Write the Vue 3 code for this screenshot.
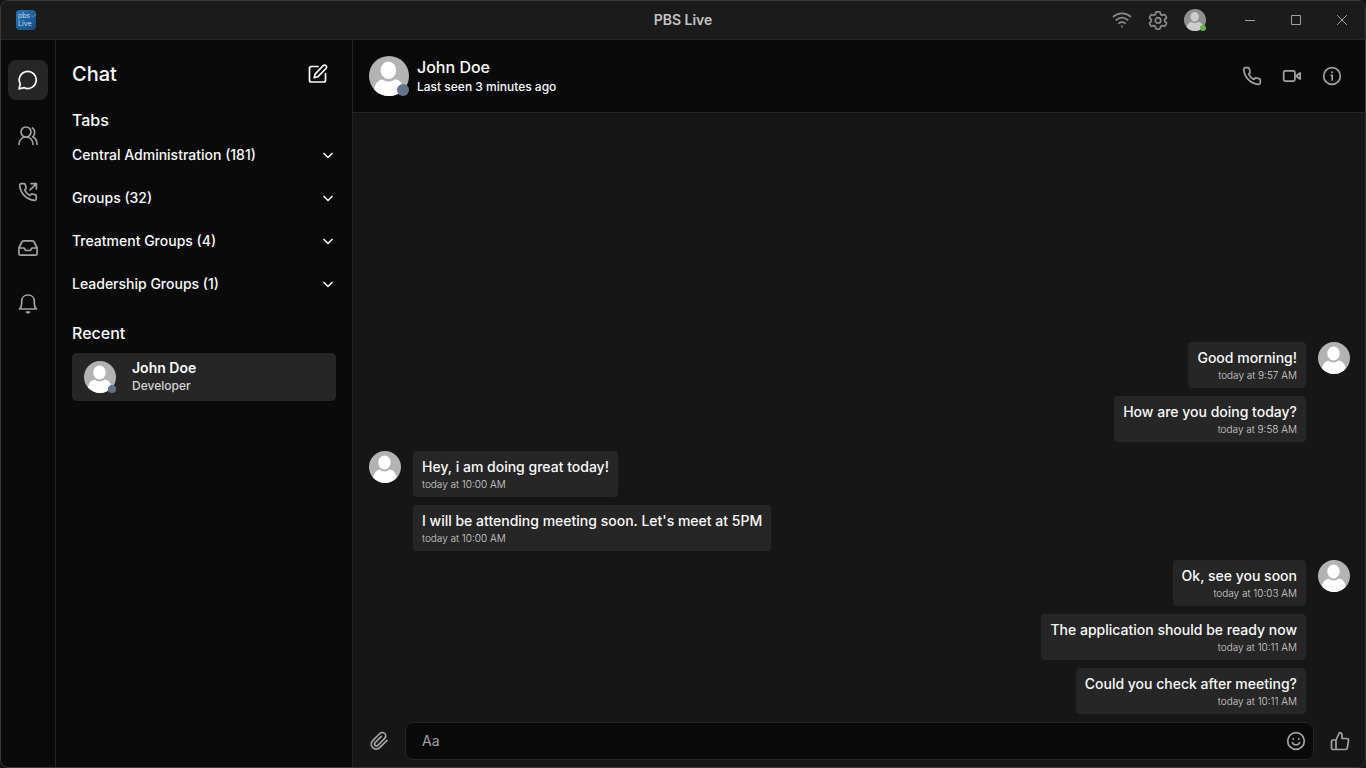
<template>
  <div class="window">
    <header class="titlebar">
      <div class="titlebar-left">
        <div class="app-logo">
          <span>pbs<i class="tick">✓</i></span>
          <span>Live</span>
        </div>
      </div>
      <h1 class="app-title">PBS Live</h1>
      <div class="titlebar-right">
        <button class="icon-button" aria-label="Connection">
          <svg class="icon" viewBox="0 0 20 20">
            <path d="M1.500 6.500c5-4.200 12-4.200 17 0M4.200 10c3.500-2.800 8.100-2.800 11.600 0M6.900 13.300c1.900-1.400 4.300-1.400 6.200 0" />
            <circle class="solid" cx="10" cy="16.500" r="1" />
          </svg>
        </button>
        <button class="icon-button" aria-label="Settings">
          <svg class="icon" viewBox="0 0 20 20">
            <path d="M8.600 1.800h2.800c.5 0 .7.300.8.700l.4 1.900 1.500.9 1.900-.7c.5-.2.800 0 1 .3l1.400 2.400c.2.400.1.700-.2 1l-1.500 1.200v1.800l1.500 1.300c.3.300.4.600.2 1L17 16c-.2.300-.5.500-1 .3l-1.900-.7-1.500.9-.4 1.900c-.1.400-.3.700-.8.700H8.600c-.5 0-.7-.3-.8-.7l-.4-1.900-1.500-.9-1.900.7c-.5.200-.8 0-1-.3l-1.400-2.400c-.2-.4-.1-.7.2-1l1.500-1.300V9.500L1.800 8.300c-.3-.3-.4-.6-.2-1L3 4.900c.2-.3.5-.5 1-.3l1.900.7 1.500-.9.4-1.900c.1-.4.300-.7.800-.7z" />
            <circle cx="10" cy="10.400" r="2.700" />
          </svg>
        </button>
        <button class="avatar avatar-small" aria-label="Account">
          <svg viewBox="0 0 32 32"><path :d="shouldersPath" /><ellipse cx="15.500" cy="11.400" rx="7.200" ry="8" /></svg>
          <span class="status online"></span>
        </button>
        <div class="window-controls">
          <button aria-label="Minimize"><svg viewBox="0 0 10 10"><path d="M0 5.500h10" /></svg></button>
          <button aria-label="Maximize"><svg viewBox="0 0 10 10"><path d="M.5.5h9v9h-9z" /></svg></button>
          <button aria-label="Close"><svg viewBox="0 0 10 10"><path d="M0 0l10 10M10 0L0 10" /></svg></button>
        </div>
      </div>
    </header>

    <div class="body">
      <nav class="rail">
        <button
          v-for="item in navItems"
          :key="item.label"
          class="rail-button"
          :class="{ active: item.label === activeNav }"
          :aria-label="item.label"
          @click="activeNav = item.label"
        >
          <svg class="icon" viewBox="0 0 20 20"><path v-for="d in item.paths" :key="d" :d="d" /></svg>
        </button>
      </nav>

      <aside class="sidebar">
        <div class="sidebar-head">
          <h2>Chat</h2>
          <button class="icon-button compose" aria-label="New chat">
            <svg class="icon" viewBox="0 0 20 20">
              <path d="M10 2.500H3.300c-1 0-1.800.8-1.800 1.800v11.900c0 1 .8 1.800 1.800 1.800h12.400c1 0 1.800-.8 1.800-1.800V9.500" />
              <path d="M15.200 1.700a1.900 1.900 0 0 1 2.800 2.800l-8.300 8.300-3.500.9.900-3.600z" />
            </svg>
          </button>
        </div>
        <h3>Tabs</h3>
        <div class="tab-list">
          <button v-for="tab in tabs" :key="tab" class="tab-row">
            <span>{{ tab }}</span>
            <svg class="chevron" viewBox="0 0 16 16"><path d="M3.500 6l4.500 4.500L12.500 6" /></svg>
          </button>
        </div>
        <h3>Recent</h3>
        <button class="contact">
          <span class="avatar avatar-medium">
            <svg viewBox="0 0 32 32"><path :d="shouldersPath" /><ellipse cx="15.500" cy="11.400" rx="7.200" ry="8" /></svg>
            <span class="status"></span>
          </span>
          <span class="contact-text">
            <span class="contact-name">John Doe</span>
            <span class="contact-role">Developer</span>
          </span>
        </button>
      </aside>

      <main class="chat">
        <div class="chat-head">
          <span class="avatar avatar-large">
            <svg viewBox="0 0 32 32"><path :d="shouldersPath" /><ellipse cx="15.500" cy="11.400" rx="7.200" ry="8" /></svg>
            <span class="status"></span>
          </span>
          <div class="chat-who">
            <h2>John Doe</h2>
            <p>Last seen 3 minutes ago</p>
          </div>
          <div class="chat-actions">
            <button class="icon-button" aria-label="Call">
              <svg class="icon" viewBox="0 0 20 20"><path :d="phonePath" /></svg>
            </button>
            <button class="icon-button" aria-label="Video call">
              <svg class="icon" viewBox="0 0 20 20">
                <rect x="1.700" y="4.900" width="11.200" height="10.200" rx="1.600" />
                <path d="M14 10l4.200-3v6z" />
              </svg>
            </button>
            <button class="icon-button" aria-label="Details">
              <svg class="icon" viewBox="0 0 20 20">
                <circle cx="10" cy="10" r="8.300" />
                <path d="M9.200 9.300h1V14" />
                <circle class="solid" cx="10" cy="6.300" r="1" />
              </svg>
            </button>
          </div>
        </div>

        <div class="messages">
          <section v-for="(group, i) in groups" :key="i" class="group" :class="{ mine: group.mine }">
            <span class="avatar avatar-medium">
              <svg viewBox="0 0 32 32"><path :d="shouldersPath" /><ellipse cx="15.500" cy="11.400" rx="7.200" ry="8" /></svg>
            </span>
            <div class="bubbles">
              <div v-for="message in group.messages" :key="message.text" class="bubble">
                <p>{{ message.text }}</p>
                <time>{{ message.time }}</time>
              </div>
            </div>
          </section>
        </div>

        <form class="composer" @submit.prevent="send">
          <button type="button" class="composer-button" aria-label="Attach file">
            <svg class="icon" viewBox="0 0 20 20">
              <path d="M18 9.300l-7.300 7.400a4.900 4.900 0 0 1-7-7l7.100-7.200a3.400 3.400 0 0 1 4.900 4.900l-6.900 7a1.900 1.900 0 0 1-2.700-2.700l6.300-6.400" />
            </svg>
          </button>
          <div class="field">
            <input v-model="draft" type="text" placeholder="Aa" aria-label="Message" />
            <button type="button" class="icon-button" aria-label="Emoji">
              <svg class="icon" viewBox="0 0 20 20">
                <circle cx="10" cy="10" r="8.300" />
                <path d="M6.400 11.800c1.600 2.800 5.600 2.800 7.200 0" />
                <circle class="solid" cx="7.200" cy="8" r="1" />
                <circle class="solid" cx="12.800" cy="8" r="1" />
              </svg>
            </button>
          </div>
          <button type="button" class="composer-button" aria-label="Like">
            <svg class="icon" viewBox="0 0 20 20">
              <path d="M6 9l3.500-7.500c1.600 0 2.500 1 2.500 2.500v3.500h4.700c1.200 0 2 .9 1.800 2.100l-1.200 7.300c-.1.900-.9 1.600-1.800 1.600H3c-.8 0-1.500-.7-1.500-1.500v-6.500C1.500 9.700 2.200 9 3 9zM6 9v9.500" />
            </svg>
          </button>
        </form>
      </main>
    </div>
  </div>
</template>

<script setup>
import { ref } from 'vue';

// Shapes used by more than one icon
const shouldersPath = 'M3.500 34c-.6-10 2.500-14.500 7.500-15.500h10c5 1 7.600 5.500 7 15.500z';
const phonePath = 'M18.300 14.200v2.400a1.700 1.700 0 0 1-1.900 1.700C8.500 17.600 2.400 11.500 1.700 3.400A1.700 1.700 0 0 1 3.400 1.600h2.400c.8 0 1.500.6 1.600 1.400.1.800.3 1.600.6 2.400.2.600.1 1.300-.4 1.700L6.600 8.100a13 13 0 0 0 5.300 5.300l1-1c.4-.5 1.100-.6 1.700-.4.800.3 1.600.5 2.400.6.800.1 1.300.8 1.300 1.600z';

const navItems = [
  { label: 'Chat', paths: ['M1 18.800l1.300-4.700a8.500 8.500 0 1 1 3.900 3.600z'] },
  {
    label: 'Contacts',
    paths: [
      'M3 6a5 5 0 1 1 10 0a5 5 0 1 1-10 0',
      'M.9 18.500c.3-4.500 3.200-7.500 7.100-7.500s6.800 3 7.100 7.500',
      'M14.500 2c2.800 1.600 2.900 6.600.2 8.800 2.600 1.200 4.200 3.800 4.400 7.400'
    ]
  },
  { label: 'Calls', paths: [phonePath, 'M12 8l6.300-6.300M13 1.600h5.400V7'] },
  {
    label: 'Inbox',
    paths: [
      'M.9 10l3-6c.3-.7.900-1.100 1.600-1.100h9c.7 0 1.300.4 1.600 1.100l3 6v5.700c0 .8-.7 1.500-1.500 1.500H2.400c-.8 0-1.500-.7-1.500-1.500z',
      'M.9 10H6l1.600 2.500h4.800L14 10h5.100'
    ]
  },
  {
    label: 'Notifications',
    paths: [
      'M1.700 15c1.500-1.300 2-3.200 2-5.700V7.200C3.700 3.600 6.300 1 10 1s6.300 2.600 6.300 6.200v2.100c0 2.500.5 4.400 2 5.700z',
      'M8.400 18c.9.900 2.300.9 3.200 0z'
    ]
  }
];

const tabs = [
  'Central Administration (181)',
  'Groups (32)',
  'Treatment Groups (4)',
  'Leadership Groups (1)'
];

const groups = ref([
  {
    mine: true,
    messages: [
      { text: 'Good morning!', time: 'today at 9:57 AM' },
      { text: 'How are you doing today?', time: 'today at 9:58 AM' }
    ]
  },
  {
    mine: false,
    messages: [
      { text: 'Hey, i am doing great today!', time: 'today at 10:00 AM' },
      { text: "I will be attending meeting soon. Let's meet at 5PM", time: 'today at 10:00 AM' }
    ]
  },
  {
    mine: true,
    messages: [
      { text: 'Ok, see you soon', time: 'today at 10:03 AM' },
      { text: 'The application should be ready now', time: 'today at 10:11 AM' },
      { text: 'Could you check after meeting?', time: 'today at 10:11 AM' }
    ]
  }
]);

const activeNav = ref('Chat');
const draft = ref('');

// Append the draft to the last group of our own messages
const send = () => {
  if (!draft.value.trim()) return;
  groups.value[groups.value.length - 1].messages.push({ text: draft.value, time: 'just now' });
  draft.value = '';
};
</script>

<style>
body {
  margin: 0;
  background-color: #141414;
}
</style>

<style scoped>
* {
  box-sizing: border-box;
}

h1, h2, h3, p {
  margin: 0;
  font-weight: 500;
}

button {
  padding: 0;
  border: none;
  background: none;
  color: inherit;
  font: inherit;
  cursor: pointer;
}

.window {
  display: flex;
  flex-direction: column;
  height: 100vh;
  border: 1px solid #3a3a3a;
  border-radius: 8px;
  overflow: hidden;
  background-color: #0a0a0a;
  color: #fafafa;
  font-family: Inter, 'Liberation Sans', sans-serif;
}

.icon {
  display: block;
  width: 20px;
  height: 20px;
  fill: none;
  stroke: currentColor;
  stroke-width: 1.7;
  stroke-linecap: round;
  stroke-linejoin: round;
}

.icon .solid {
  fill: currentColor;
  stroke: none;
}

.icon-button {
  color: #a3a3a3;
}

/* Title bar */
.titlebar {
  display: grid;
  grid-template-columns: 1fr auto 1fr;
  align-items: center;
  height: 39px;
  flex-shrink: 0;
  border-bottom: 1px solid #262626;
  background-color: #1b1b1b;
}

.titlebar-left {
  padding-left: 15px;
}

.app-logo {
  display: flex;
  flex-direction: column;
  justify-content: center;
  width: 20px;
  height: 20px;
  padding-left: 2px;
  border-radius: 4px;
  background: linear-gradient(135deg, #2876b4, #124b86);
  color: #c9d8e5;
  font-size: 7px;
  line-height: 8px;
  white-space: nowrap;
}

.tick {
  color: #4fa3a8;
}

.app-title {
  color: #c4c4c4;
  font-size: 14px;
  font-weight: 600;
  line-height: 18px;
}

.titlebar-right {
  display: flex;
  align-items: center;
  justify-content: flex-end;
  gap: 16px;
}

.titlebar-right .icon-button {
  color: #8a8a8a;
}

.window-controls {
  display: flex;
  margin-left: 5px;
}

.window-controls button {
  display: flex;
  align-items: center;
  justify-content: center;
  width: 46px;
  height: 38px;
}

.window-controls svg {
  width: 10px;
  height: 10px;
  fill: none;
  stroke: #a0a0a0;
  stroke-width: 1;
}

/* Avatars */
.avatar {
  position: relative;
  display: block;
  flex-shrink: 0;
}

.avatar svg {
  display: block;
  width: 100%;
  height: 100%;
  border-radius: 50%;
  background-color: #b3b3b3;
  fill: #fff;
}

.avatar ellipse {
  stroke: #b3b3b3;
  stroke-width: 2;
}

.avatar-small {
  width: 22px;
  height: 22px;
}

.avatar-small svg {
  filter: brightness(0.8);
}

.avatar-medium {
  width: 32px;
  height: 32px;
}

.avatar-large {
  width: 40px;
  height: 40px;
}

.status {
  position: absolute;
  right: 0;
  bottom: 0;
  width: 8px;
  height: 8px;
  border-radius: 50%;
  background-color: #64748b;
}

.avatar-large .status {
  width: 12px;
  height: 12px;
}

.status.online {
  width: 6px;
  height: 6px;
  background-color: #6ab04c;
}

/* Navigation rail */
.body {
  display: flex;
  flex: 1;
  min-height: 0;
}

.rail {
  display: flex;
  flex-direction: column;
  gap: 16px;
  padding: 20px 7px;
  border-right: 1px solid #262626;
}

.rail-button {
  display: flex;
  align-items: center;
  justify-content: center;
  width: 40px;
  height: 40px;
  border-radius: 8px;
  color: #a3a3a3;
}

.rail-button.active {
  background-color: #262626;
  color: #fafafa;
}

/* Sidebar */
.sidebar {
  display: flex;
  flex-direction: column;
  flex-shrink: 0;
  width: 297px;
  padding: 18px 16px;
  border-right: 1px solid #262626;
}

.sidebar-head {
  display: flex;
  align-items: center;
  justify-content: space-between;
  height: 32px;
  margin-bottom: 18px;
  padding-right: 8px;
}

.sidebar-head h2 {
  font-size: 20px;
}

.compose {
  color: #fafafa;
}

.sidebar h3 {
  font-size: 16px;
  line-height: 24px;
}

.tab-list {
  display: flex;
  flex-direction: column;
  padding: 1px 0 16px;
}

.tab-row {
  display: flex;
  align-items: center;
  justify-content: space-between;
  height: 43px;
  font-size: 14px;
  font-weight: 500;
}

.chevron {
  width: 16px;
  height: 16px;
  fill: none;
  stroke: currentColor;
  stroke-width: 1.5;
}

.contact {
  display: flex;
  align-items: center;
  gap: 16px;
  height: 48px;
  margin-top: 8px;
  padding: 0 12px;
  border-radius: 5px;
  background-color: #262626;
  text-align: left;
}

.contact-text {
  display: flex;
  flex-direction: column;
}

.contact-name {
  font-size: 14px;
  font-weight: 600;
  line-height: 18px;
}

.contact-role {
  color: #d4d4d4;
  font-size: 12px;
  font-weight: 500;
  line-height: 18px;
}

/* Conversation */
.chat {
  display: flex;
  flex-direction: column;
  flex: 1;
  min-width: 0;
  background-color: #161616;
}

.chat-head {
  display: flex;
  align-items: center;
  gap: 8px;
  height: 73px;
  flex-shrink: 0;
  padding: 0 23px 0 16px;
  border-bottom: 1px solid #262626;
  background-color: #0a0a0a;
}

.chat-who {
  flex: 1;
}

.chat-who h2 {
  font-size: 16px;
  line-height: 22px;
}

.chat-who p {
  font-size: 12px;
  line-height: 18px;
}

.chat-actions {
  display: flex;
  gap: 20px;
}

.messages {
  display: flex;
  flex-direction: column;
  justify-content: flex-end;
  gap: 9px;
  flex: 1;
  min-height: 0;
  overflow: hidden;
  padding: 0 15px 8px 16px;
}

.group {
  display: flex;
  gap: 12px;
}

.group.mine {
  flex-direction: row-reverse;
}

.bubbles {
  display: flex;
  flex-direction: column;
  align-items: flex-start;
  gap: 8px;
}

.mine .bubbles {
  align-items: flex-end;
}

.bubble {
  padding: 6px 9px;
  border-radius: 4px;
  background-color: #262626;
}

.bubble p {
  font-size: 14px;
  line-height: 20px;
}

.bubble time {
  display: block;
  color: #d4d4d4;
  font-size: 10px;
  font-weight: 300;
  line-height: 14px;
}

.mine .bubble time {
  text-align: right;
}

/* Composer */
.composer {
  display: flex;
  align-items: center;
  gap: 8px;
  padding: 0 7px 7px 8px;
}

.composer-button {
  display: flex;
  align-items: center;
  justify-content: center;
  width: 36px;
  height: 36px;
  color: #a3a3a3;
}

.field {
  display: flex;
  align-items: center;
  flex: 1;
  height: 38px;
  padding: 0 7px 0 16px;
  border: 1px solid #262626;
  border-radius: 8px;
  background-color: #0a0a0a;
}

.field input {
  flex: 1;
  min-width: 0;
  padding: 0;
  border: none;
  outline: none;
  background: none;
  color: #fafafa;
  font-family: inherit;
  font-size: 14px;
  line-height: 18px;
}

.field input::placeholder {
  color: #a3a3a3;
}
</style>
